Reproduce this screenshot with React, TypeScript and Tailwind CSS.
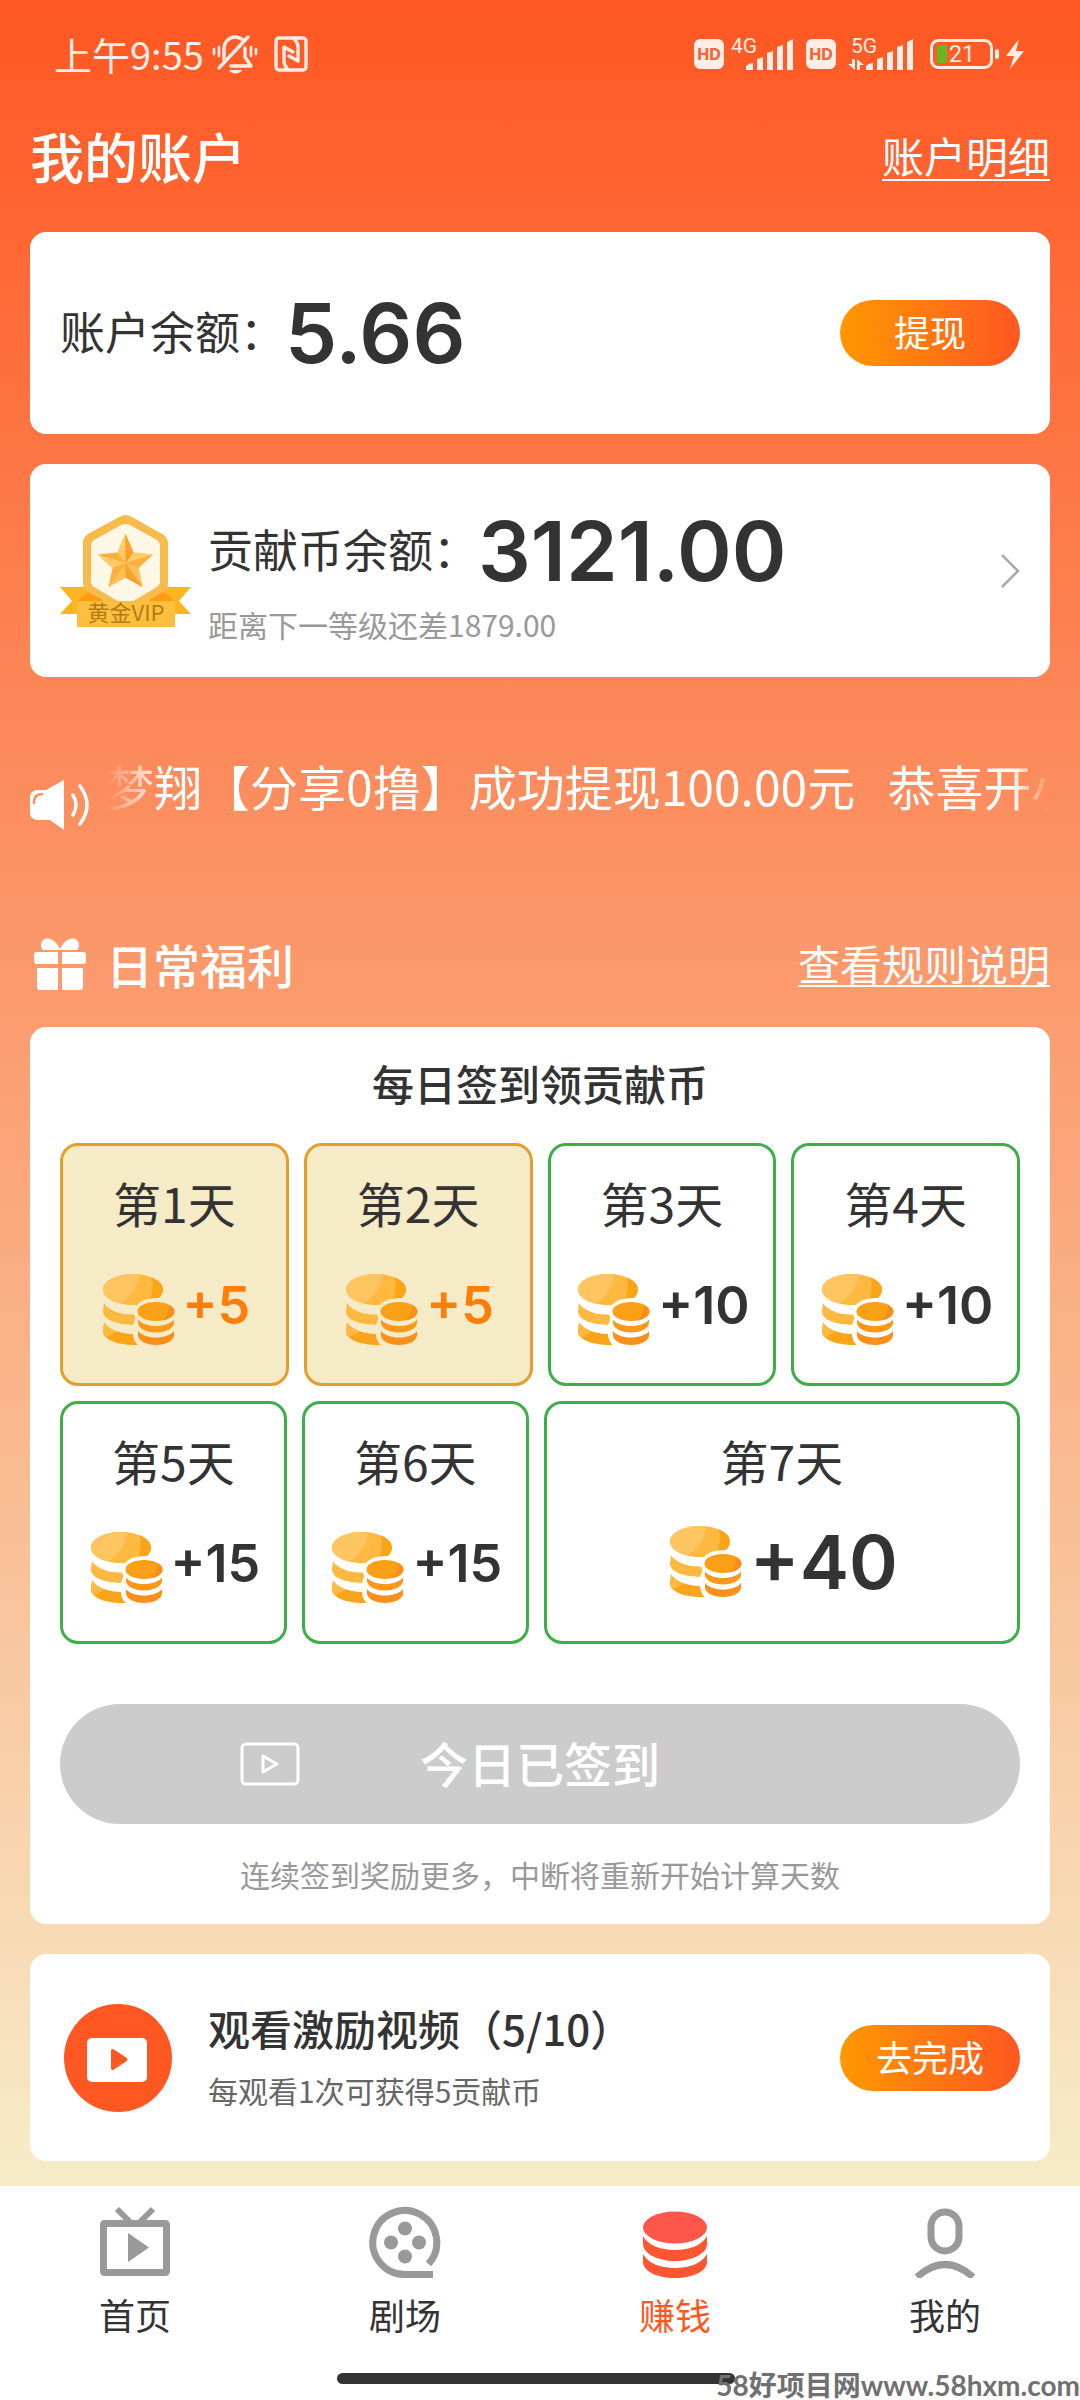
import React from 'react';

type Day = { day: number; reward: number; done?: boolean };

const firstRow: Day[] = [
  { day: 1, reward: 5, done: true },
  { day: 2, reward: 5, done: true },
  { day: 3, reward: 10 },
  { day: 4, reward: 10 },
];

const secondRow: Day[] = [
  { day: 5, reward: 15 },
  { day: 6, reward: 15 },
  { day: 7, reward: 40 },
];

const SilentIcon = () => (
  <svg width="46" height="40" viewBox="0 0 46 40" fill="none" stroke="#ffece4" strokeWidth="3.4" strokeLinecap="round">
    <path d="M12 26V15C12 8 17 3 23 3c3 0 6 1 8 3" />
    <path d="M7 34 36 3" />
    <path d="M33 14v9l6 9H19" strokeLinejoin="round" />
    <path d="M2 15v5M7 13v9M39 13v9M44 15v5" strokeWidth="2.6" />
    <path d="M17 36h13c-1 2-3.500 3.500-6.500 3.500S18 38 17 36Z" fill="#ffece4" stroke="none" />
  </svg>
);

const NfcIcon = () => (
  <svg width="34" height="36" viewBox="0 0 34 36" fill="none" stroke="#ffece4" strokeWidth="3.400" strokeLinejoin="round" strokeLinecap="round">
    <rect x="2" y="2" width="30" height="32" rx="3" />
    <path d="M13 32c-2-2-3-4-3-7V11l9 5" />
    <path d="M21 4c2 2 3 4 3 7v14l-9-5" />
  </svg>
);

const HdIcon = () => (
  <svg width="30" height="30" viewBox="0 0 30 30">
    <rect width="30" height="30" rx="6" fill="#ffece4" />
    <text x="15" y="21" textAnchor="middle" fontSize="16" fontWeight="800" fontFamily="Inter, sans-serif" fill="#f0693d">HD</text>
  </svg>
);

const SignalIcon = ({ label, arrows }: { label: string; arrows?: boolean }) => (
  <svg width="66" height="40" viewBox="0 -2 66 40" fill="#ffece4">
    <text x="3" y="17" fontSize="21" fontFamily="Roboto, sans-serif">{label}</text>
    {arrows && <path d="M4 23h3v11L0 28h4ZM9 34V23l7 6h-4v5Z" />}
    <path d="M18 30q3-3 7-3v7h-7ZM29 23l6-2v13h-6ZM39 17l6-2v19h-6ZM49 11l6-2v25h-6ZM59 6l6-3v31h-6Z" />
  </svg>
);

const BatteryIcon = () => (
  <svg width="96" height="32" viewBox="0 0 96 32">
    <rect x="1.500" y="2.500" width="60" height="27" rx="7" fill="none" stroke="#ffece4" strokeWidth="3" />
    <rect x="7" y="7" width="10" height="18" rx="2" fill="#66b81c" />
    <text x="32" y="24" textAnchor="middle" fontSize="23" fontFamily="Roboto, sans-serif" fill="#ffece4">21</text>
    <rect x="65" y="11" width="4" height="10" rx="2" fill="#ffece4" />
    <path d="M89 1 76 18h8l-4 13 14-18h-8Z" fill="#ffece4" />
  </svg>
);

const BadgeIcon = () => (
  <svg width="132" height="112" viewBox="0 0 132 112" className="shrink-0">
    <path d="M0 72h30v27H0l12-13ZM131 72h-30v27h30l-12-13Z" fill="#fdb51f" />
    <path d="M17 86 32 74l12 12ZM115 86 100 74 88 86Z" fill="#fb9d0e" />
    <path d="M60 1.500q5.500-3 11 0l32 18q5 3 5 9v40q0 6-5 9L71 94H60L28 77q-5-3-5-9V28q0-6 5-9Z" fill="#f6bb4b" />
    <path d="M61 10q4.500-2 9 0l27 15q3 2 3 5v36q0 4-3 6L70 88h-9L34 72q-3-2-3-6V30q0-3 3-5Z" fill="#fff7e6" />
    <path d="m65.500 19 8 18.500 19.500 2-14.500 13.500 4 19-17-9.500-17 9.500 4-19L38 39.500l19.500-2Z" fill="#fbb03b" />
    <path d="M65.500 19v29L57.500 37.500ZM38 39.500 65.500 48l-13 5ZM93 39.500 65.500 48l8-10.500Z" fill="#ffcb69" />
    <path d="M48.500 72 65.500 48v14.500ZM82.500 72 65.500 48l13 5Z" fill="#fdc05a" />
    <path d="M65.500 48v14.500l17 9.500ZM65.500 19v29l8-10.500Z" fill="#f9a12c" />
    <path d="M17 86h98v26H17Z" fill="#fcbf3d" />
    <text x="66" y="106" textAnchor="middle" fontSize="22" fontFamily="'Noto Sans CJK SC', sans-serif" fill="#b27b17">黄金VIP</text>
  </svg>
);

const SpeakerIcon = () => (
  <svg width="60" height="52" viewBox="0 0 60 52" className="shrink-0">
    <path d="M34 1v50L20 41H8q-8 0-8-8V19q0-8 8-8h8Z" fill="#fff" />
    <path d="M4 24q0-9 8-9" fill="none" stroke="#fd9060" strokeWidth="2.500" strokeLinecap="round" />
    <path d="M43 16q6 10 0 20M50 7q14 19 0 38" fill="none" stroke="#fff" strokeWidth="3.500" strokeLinecap="round" />
  </svg>
);

const GiftIcon = () => (
  <svg width="52" height="52" viewBox="0 0 52 52" fill="#fff">
    <path d="M26 11C23 5 17-1 11 1 6 3 6 9 9 12h34c3-3 3-9-2-11-6-2-12 4-15 10Z" />
    <path d="M3 14h21v12H3q-3 0-3-3v-6q0-3 3-3ZM28 14h21q3 0 3 3v6q0 3-3 3H28ZM3 30h21v22H6q-3 0-3-3ZM28 30h21v19q0 3-3 3H28Z" />
  </svg>
);

const CoinsIcon = () => (
  <svg width="72" height="72" viewBox="0 0 72 72" className="shrink-0">
    <path d="M30 0C47 0 60 7 60 15.500c0 3-1.500 6-4 8.500-9-.5-18 2-22 7h-4C13 31 0 24 0 15.500S13 0 30 0Z" fill="#ffb940" />
    <path d="M36 .5C35 12 29 23 17 29.500 7 27 0 22 0 15.500 0 7 13 0 30 0Z" fill="#ffc560" />
    <path d="M49 3.500c7 3 11 7 11 12 0 3-1.500 6-4 8.500-3-.2-6 0-8.500.5C50 18 50 10 49 3.500Z" fill="#faa41a" />
    <path d="M1 29c4 7 16 12 30 11.500l1.500 3.500-2.500 7C14 50.500 0 46 0 37.500Z" fill="#ffb940" />
    <path d="M1 48.500C5 55 17 60 30 60q0 6 4.500 11C16 71.500 0 66 0 57.500Z" fill="#faa41a" />
    <path d="M1 48.500C4 53 9 56 14 57.500L3 63.500Q0 61 0 57.500Z" fill="#ffb940" />
    <ellipse cx="53" cy="37.500" rx="18.500" ry="9.500" fill="#faa016" />
    <path d="M66 31c3 1.500 5.500 4 5.500 6.500 0 4-5 7.500-11.500 9 4-4 6-10 6-15.500Z" fill="#f98e1a" />
    <path d="M35 45.500c3 4 10 6.500 18 6.500s15-2.500 18-6.500V49c0 5-8 9.500-18 9.500S35 54 35 49Z" fill="#fb981a" />
    <path d="M35 57c3 4 10 6.500 18 6.500S68 61 71 57v4.500c0 5-8 9.500-18 9.500s-18-4.500-18-9.500Z" fill="#fa8f1b" />
  </svg>
);

const VideoOutlineIcon = () => (
  <svg width="60" height="44" viewBox="0 0 60 44" fill="none" stroke="#fff" strokeWidth="3" strokeLinejoin="round">
    <rect x="2" y="2" width="56" height="40" rx="4" />
    <path d="M23 14v16l14-8Z" />
  </svg>
);

const VideoIcon = () => (
  <svg width="108" height="108" viewBox="0 0 108 108" className="shrink-0">
    <circle cx="54" cy="54" r="54" fill="#ff5722" />
    <rect x="23" y="34" width="60" height="44" rx="5" fill="#fff" />
    <path d="M47 47q0-3 3-1.500l12 8q3 2 0 4l-12 8q-3 1.500-3-1.500Z" fill="#ff5722" />
  </svg>
);

const HomeIcon = () => (
  <svg width="72" height="72" viewBox="0 0 72 72" fill="none" stroke="#999" strokeWidth="7">
    <rect x="4.500" y="17.500" width="63" height="49" rx="1" strokeLinejoin="round" />
    <path d="m18 3 14 14M54 3 40 17" strokeWidth="6" />
    <path d="M29 27v29l21-14.500Z" fill="#999" stroke="none" />
  </svg>
);

const TheaterIcon = () => (
  <svg width="72" height="72" viewBox="0 -1 72 72" fill="#999">
    <path d="M64 67.500H36A32 32 0 1 1 59.500 57" fill="none" stroke="#999" strokeWidth="7" />
    <circle cx="36" cy="21.500" r="7" />
    <circle cx="22" cy="35.500" r="7" />
    <circle cx="50" cy="35.500" r="7" />
    <circle cx="36" cy="49.500" r="7" />
  </svg>
);

const EarnIcon = () => (
  <svg width="72" height="72" viewBox="0 -1 72 72" fill="#ff5530">
    <ellipse cx="36" cy="20.500" rx="32" ry="16" fill="#ff564c" />
    <path d="M4 29c5 9 17 14 32 14s27-5 32-14v8c0 9-14 17-32 17S4 46 4 37Z" />
    <path d="M4 47c5 9 17 14 32 14s27-5 32-14v8c0 9-14 16-32 16S4 64 4 55Z" />
  </svg>
);

const MineIcon = () => (
  <svg width="72" height="72" viewBox="0 -2 72 72" fill="none" stroke="#999" strokeWidth="7">
    <rect x="22" y="4" width="28" height="39" rx="14" />
    <path d="M8 69q28-25 56 0" />
  </svg>
);

const tabs = [
  { label: '首页', icon: <HomeIcon /> },
  { label: '剧场', icon: <TheaterIcon /> },
  { label: '赚钱', icon: <EarnIcon />, active: true },
  { label: '我的', icon: <MineIcon /> },
];

const DayCard = ({ day, reward, done }: Day) => {
  const last = day === 7;
  return (
    <li
      className={`flex h-[243px] flex-col items-center rounded-[18px] border-3 pt-[26px] ${
        done ? 'border-[#e59d2b] bg-[#f5ecc7]' : 'border-[#3dae48] bg-white'
      }`}
    >
      <span className="text-[48px] leading-[60px]">第{day}天</span>
      <div className={`flex items-center gap-2 pl-1 ${last ? 'mt-[34px]' : 'mt-[42px]'}`}>
        <CoinsIcon />
        <span
          className={`font-[Inter,sans-serif] font-semibold ${
            last ? 'text-[74px] leading-[76px]' : 'pb-2 text-[52px] leading-[60px]'
          } ${done ? 'text-[#ff7d0a]' : ''}`}
        >
          +{reward}
        </span>
      </div>
    </li>
  );
};

export default function App() {
  return (
    <div className="flex min-h-screen flex-col overflow-hidden bg-white font-['Noto_Sans_CJK_SC',sans-serif] text-[#333]">
      <div className="flex-1 bg-linear-to-b/srgb from-[#ff5722] to-[#f6ecc8] px-[30px] pb-6">
        <div className="flex items-center justify-between pt-[30px] pr-6 pl-6 text-[#ffece4]">
          <div className="flex items-center">
            <span className="text-[38px] leading-[48px]">上午9:55</span>
            <div className="ml-2 flex items-center gap-4">
              <SilentIcon />
              <NfcIcon />
            </div>
          </div>
          <div className="flex items-center gap-3">
            <div className="flex items-center gap-1">
              <HdIcon />
              <SignalIcon label="4G" />
            </div>
            <div className="flex items-center gap-3">
              <HdIcon />
              <SignalIcon label="5G" arrows />
            </div>
            <div className="pl-1">
              <BatteryIcon />
            </div>
          </div>
        </div>

        <header className="mt-[38px] flex items-center justify-between text-white">
          <h1 className="text-[54px] leading-[80px] font-medium">我的账户</h1>
          <a href="#detail" className="border-b-2 border-white text-[42px] leading-[48px]">账户明细</a>
        </header>

        <main>
          <section className="mt-[36px] flex h-[202px] items-center justify-between rounded-[16px] bg-white px-[30px]">
            <div className="flex items-center">
              <span className="pb-1 text-[45px] leading-[60px]">账户余额：</span>
              <span className="font-[Inter,sans-serif] text-[83px] leading-[90px] font-semibold">5.66</span>
            </div>
            <button className="h-[66px] w-[180px] rounded-full bg-linear-to-r/srgb from-[#ff9800] to-[#ff5722] pb-1 text-[36px] leading-[60px] text-white">
              提现
            </button>
          </section>

          <section className="mt-[30px] flex h-[213px] items-center rounded-[16px] bg-white px-[30px]">
            <BadgeIcon />
            <div className="ml-4 flex-1 pt-2">
              <div className="flex items-center">
                <span className="pb-1 text-[45px] leading-[60px]">贡献币余额：</span>
                <span className="font-[Inter,sans-serif] text-[83px] leading-[90px] font-semibold">3121.00</span>
              </div>
              <p className="mt-2 text-[30px] leading-[40px] text-[#999]">距离下一等级还差1879.00</p>
            </div>
            <svg width="20" height="36" viewBox="0 0 20 36" fill="none" stroke="#aaa" strokeWidth="2.500">
              <path d="m2 2 16 16L2 34" />
            </svg>
          </section>

          <div className="mt-[78px] flex items-end gap-4 text-white">
            <SpeakerIcon />
            <p className="mb-4 flex-1 overflow-hidden text-[48px] leading-[60px] whitespace-pre [mask-image:linear-gradient(to_right,transparent,black_6%,black_96%,transparent)]">
              梦翔【分享0撸】成功提现100.00元{'   '}恭喜开小
            </p>
          </div>

          <div className="mt-[98px] flex items-center justify-between text-white">
            <h2 className="flex items-center gap-5 pl-1 text-[47px] leading-[70px] font-medium">
              <GiftIcon />
              日常福利
            </h2>
            <a href="#rules" className="border-b-2 border-white text-[42px] leading-[44px]">查看规则说明</a>
          </div>

          <section className="mt-[28px] rounded-[16px] bg-white px-[30px] pt-[26px] pb-[30px]">
            <h3 className="text-center text-[42px] leading-[60px] font-medium">每日签到领贡献币</h3>
            <ul className="mt-[30px] grid grid-cols-4 gap-[15px]">
              {firstRow.map((item) => (
                <DayCard key={item.day} {...item} />
              ))}
            </ul>
            <ul className="mt-[15px] grid grid-cols-[1fr_1fr_2.1fr] gap-[15px]">
              {secondRow.map((item) => (
                <DayCard key={item.day} {...item} />
              ))}
            </ul>
            <button className="mt-[60px] grid h-[120px] w-full grid-cols-[180px_auto_180px] items-center justify-center rounded-full bg-[#ccc] text-[48px] leading-[60px] font-medium text-white">
              <VideoOutlineIcon />
              <span className="pb-1">今日已签到</span>
            </button>
            <p className="mt-[30px] text-center text-[30px] leading-[40px] text-[#999]">
              连续签到奖励更多，中断将重新开始计算天数
            </p>
          </section>

          <section className="mt-[30px] flex h-[207px] items-center rounded-[16px] bg-white px-[30px]">
            <div className="flex w-[148px] pl-1">
              <VideoIcon />
            </div>
            <div className="flex-1 pb-2">
              <h3 className="text-[42px] leading-[60px] font-medium">观看激励视频（5/10）</h3>
              <p className="mt-3 text-[30px] leading-[40px] text-[#666]">每观看1次可获得5贡献币</p>
            </div>
            <button className="h-[66px] w-[180px] rounded-full bg-linear-to-r/srgb from-[#ff9800] to-[#ff5722] pb-1 text-[36px] leading-[60px] text-white">
              去完成
            </button>
          </section>
        </main>
      </div>

      <footer className="relative bg-white">
        <nav className="grid grid-cols-4 pt-5">
          {tabs.map((tab) => (
            <button key={tab.label} className="flex flex-col items-center gap-3">
              {tab.icon}
              <span className={`text-[36px] leading-[48px] ${tab.active ? 'text-[#ff5722]' : ''}`}>{tab.label}</span>
            </button>
          ))}
        </nav>
        <div className="flex h-[62px] items-end justify-center pr-2 pb-4">
          <div className="h-[11px] w-[398px] rounded-full bg-[#333]" />
        </div>
        <span className="absolute right-0 bottom-0 font-[Lato,'Noto_Sans_CJK_SC',sans-serif] text-[28px] leading-[30px] font-bold whitespace-nowrap text-[#707070]">
          58好项目网www.58hxm.com
        </span>
      </footer>
    </div>
  );
}
